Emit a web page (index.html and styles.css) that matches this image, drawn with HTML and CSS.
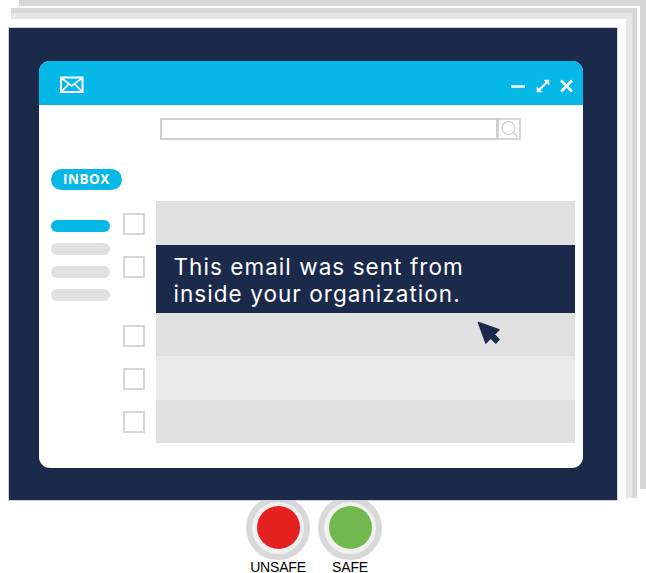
FILE: index.html
```html
<!DOCTYPE html>
<html lang="en">
<head>
  <meta charset="UTF-8">
  <meta name="viewport" content="width=device-width, initial-scale=1.0">
  <title>Inbox quiz</title>
  <link rel="stylesheet" href="styles.css">
</head>
<body>
  <div class="sheet-back">
    <div class="sheet-mid">
      <div class="sheet-front">
        <div class="slide">
          <div class="window">
            <div class="window-bar">
              <svg class="icon-mail" width="24" height="18" viewBox="0 0 24 18" fill="none" stroke="#fff" stroke-width="2">
                <rect x="1" y="1.5" width="21.5" height="14.5"/>
                <path d="M1.5 2l10.2 8 10.3-8M1.5 15.5l7.2-7.4M22 15.5l-7.2-7.4" stroke-width="1.6"/>
              </svg>
              <div class="window-controls">
                <svg width="14" height="14" viewBox="0 0 14 14" fill="none" stroke="#fff" stroke-width="2.5">
                  <path d="M0 7.5h14"/>
                </svg>
                <svg width="14" height="14" viewBox="0 0 14 14" fill="none" stroke="#fff" stroke-width="2.2">
                  <path d="M2.5 11.5L11.500 2.500"/>
                  <path d="M7.500 0.700h5.800v5.800z" fill="#fff" stroke="none"/>
                  <path d="M0.700 7.500v5.800h5.800z" fill="#fff" stroke="none"/>
                </svg>
                <svg width="13" height="14" viewBox="0 0 13 14" fill="none" stroke="#fff" stroke-width="2.5">
                  <path d="M1 1.500l11 11M12 1.500l-11 11"/>
                </svg>
              </div>
            </div>
            <div class="window-body">
              <div class="search">
                <div class="search-field"></div>
                <div class="search-btn">
                  <svg width="19" height="18" viewBox="0 0 19 18" fill="none" stroke="#cfcfcf" stroke-width="1.300">
                    <circle cx="8.500" cy="8" r="6.500"/>
                    <path d="M13.200 12.600l4.300 4.400"/>
                  </svg>
                </div>
              </div>
              <div class="content">
                <div class="sidebar">
                  <div class="inbox-pill">INBOX</div>
                  <div class="folders">
                    <div class="folder folder-active"></div>
                    <div class="folder"></div>
                    <div class="folder"></div>
                    <div class="folder"></div>
                  </div>
                </div>
                <div class="mail-list">
                  <div class="mail">
                    <div class="check"></div>
                    <div class="mail-row row-short"></div>
                  </div>
                  <div class="mail">
                    <div class="check check-high"></div>
                    <div class="mail-row row-message">This email was sent from<br>inside your organization.</div>
                  </div>
                  <div class="mail">
                    <div class="check"></div>
                    <div class="mail-row row-low">
                      <svg class="cursor" width="24" height="24" viewBox="-1 -1 25 25" fill="#1b2a4a" stroke="#1b2a4a" stroke-width="1.500" stroke-linejoin="round">
                        <path d="M0.500 0.500L21.800 8l-4.800 5 5 5.400-3.400 3.600-5.400-5.200-5 5z"/>
                      </svg>
                    </div>
                  </div>
                  <div class="mail">
                    <div class="check"></div>
                    <div class="mail-row row-pale"></div>
                  </div>
                  <div class="mail">
                    <div class="check check-high"></div>
                    <div class="mail-row row-low"></div>
                  </div>
                </div>
              </div>
            </div>
          </div>
        </div>
      </div>
    </div>
  </div>

  <div class="answers">
    <div class="answer">
      <div class="ring"><div class="lamp lamp-red"></div></div>
      <div class="answer-label">UNSAFE</div>
    </div>
    <div class="answer">
      <div class="ring"><div class="lamp lamp-green"></div></div>
      <div class="answer-label">SAFE</div>
    </div>
  </div>
</body>
</html>
```

FILE: styles.css
```css
/* Page */
html, body {
  height: 573px;
  overflow: hidden;
}

body {
  margin: 0;
  background: #fff;
  font-family: 'Inter', 'Liberation Sans', sans-serif;
}

/* Stacked sheets behind the slide */
.sheet-back {
  box-sizing: border-box;
  width: 627px;
  height: 489px;
  margin-left: 19px;
  padding-top: 2px;
  border-top: 6px solid #d6d6d6;
  border-right: 6px solid #d6d6d6;
}

.sheet-mid {
  box-sizing: border-box;
  width: 626px;
  height: 490px;
  margin-left: -8px;
  border-top: 5px solid #d8d8d8;
  border-right: 5px solid #d8d8d8;
}

.sheet-front {
  box-sizing: border-box;
  height: 485px;
  padding-top: 9px;
  border-top: 6px solid #e6e6e6;
  border-right: 6px solid #e6e6e6;
}

.slide {
  position: relative;
  z-index: 1;
  box-sizing: border-box;
  width: 608px;
  height: 472px;
  margin-left: -2px;
  padding: 33px 34px 32px 30px;
  background: #1b2a4a;
  box-shadow: 0 0 0 1px #cfd2d8;
}

/* Mail window */
.window {
  overflow: hidden;
  background: #fff;
  border-radius: 11px;
}

.window-bar {
  display: flex;
  justify-content: space-between;
  align-items: center;
  height: 44px;
  padding: 0 10px 0 21px;
  background: #05b8e8;
}

.icon-mail {
  margin-top: 4px;
}

.window-controls {
  display: flex;
  gap: 10.500px;
  margin-top: 6px;
}

.window-body {
  padding: 13px 8px 25px 12px;
}

.search {
  display: flex;
  height: 22px;
  margin-left: 109px;
}

.search-field {
  box-sizing: border-box;
  width: 338px;
  border: 2px solid #cfcfcf;
}

.search-btn {
  box-sizing: border-box;
  display: flex;
  justify-content: center;
  align-items: center;
  width: 23px;
  border: 2px solid #d6d6d6;
  border-left-width: 1px;
}

.content {
  display: flex;
  align-items: flex-start;
  margin-top: 29px;
}

/* Sidebar */
.sidebar {
  width: 72px;
}

.inbox-pill {
  width: 71px;
  height: 20.500px;
  border-radius: 11px;
  background: #05b8e8;
  color: #fff;
  font-family: 'Open Sans', sans-serif;
  font-size: 13.500px;
  font-weight: 700;
  line-height: 20.500px;
  letter-spacing: 0.500px;
  text-align: center;
}

.folders {
  display: flex;
  flex-direction: column;
  gap: 11.500px;
  margin-top: 30.500px;
}

.folder {
  width: 59px;
  height: 11.500px;
  border-radius: 6px;
  background: #e1e1e1;
}

.folder-active {
  background: #05b8e8;
}

/* Mail list */
.mail-list {
  margin-top: 32px;
}

.mail {
  display: flex;
  align-items: flex-start;
}

.check {
  box-sizing: border-box;
  flex: none;
  width: 22px;
  height: 22px;
  margin: 12px 11px 0 0;
  border: 2px solid #d6d6d6;
}

.check-high {
  margin-top: 11px;
}

.mail-row {
  position: relative;
  width: 419px;
  background: #e0e0e0;
}

.row-short {
  height: 44px;
}

.row-low {
  height: 43px;
}

.row-pale {
  height: 44px;
  background: #eaeaea;
}

.row-message {
  box-sizing: border-box;
  height: 68px;
  padding: 8px 0 0 17.500px;
  background: #1b2a4a;
  color: #fff;
  font-size: 22.500px;
  line-height: 27px;
  letter-spacing: 1.050px;
}

.cursor {
  position: absolute;
  left: 321px;
  top: 8px;
}

/* Unsafe / safe buttons */
.answers {
  display: flex;
  gap: 8px;
  margin-top: 11px;
  padding-left: 246px;
}

.answer {
  width: 64px;
}

.ring {
  box-sizing: border-box;
  display: flex;
  justify-content: center;
  align-items: center;
  width: 64px;
  height: 64px;
  margin-top: -4.500px;
  border: 6px solid #d8d8d8;
  border-radius: 50%;
  background: #f0f0f0;
}

.lamp {
  width: 43px;
  height: 43px;
  border-radius: 50%;
}

.lamp-red {
  background: #e5211f;
}

.lamp-green {
  background: #71b84f;
}

.answer-label {
  margin: 1px -10px 0;
  color: #000;
  font-family: 'Liberation Sans', Arial, sans-serif;
  font-size: 14px;
  line-height: 13px;
  letter-spacing: -0.200px;
  text-align: center;
}
```
